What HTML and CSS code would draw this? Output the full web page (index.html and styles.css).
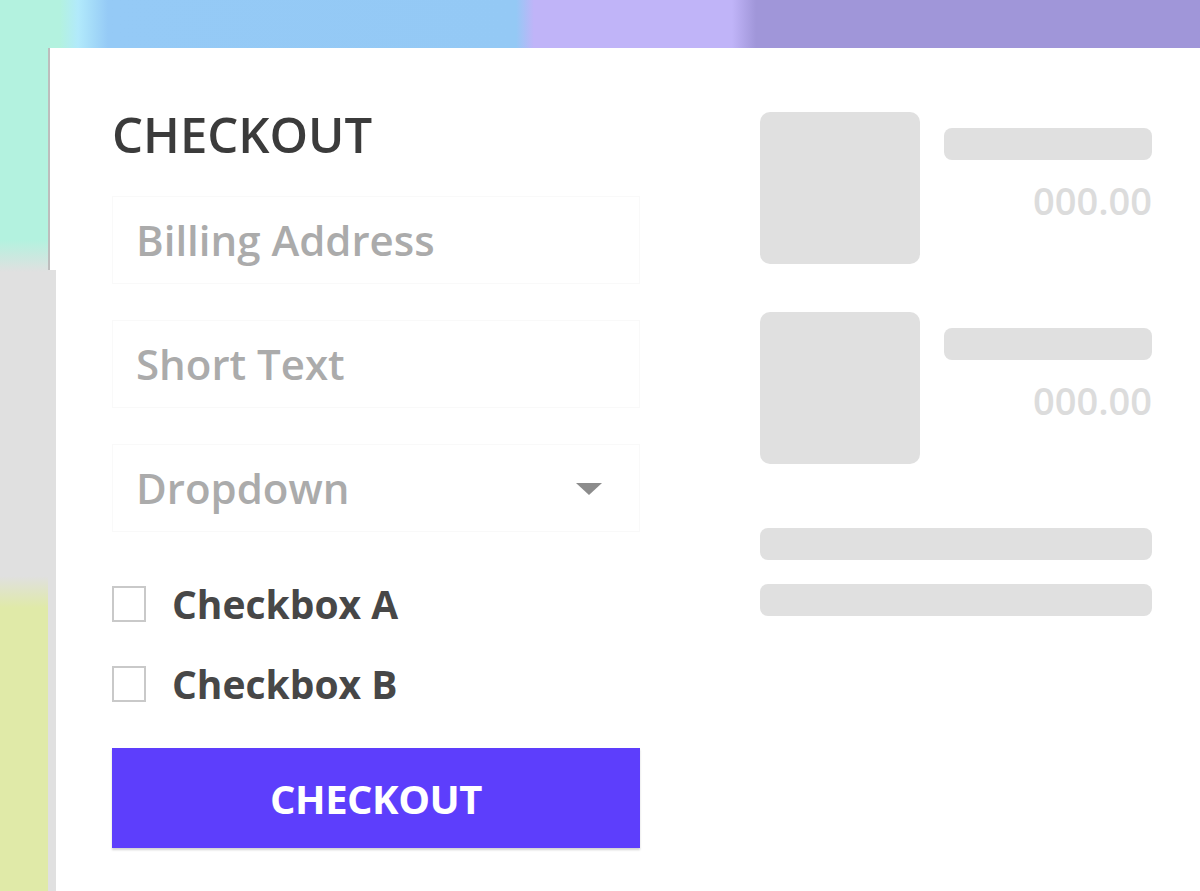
FILE: index.html
```html
<!DOCTYPE html>
<html lang="en">
<head>
    <meta charset="UTF-8">
    <meta name="viewport" content="width=device-width, initial-scale=1.0">
    <title>Checkout</title>
    <link rel="stylesheet" href="styles.css">
</head>
<body>

    <!-- COLOURED FRAME -->
    <div class="top-band"></div>

    <div class="stage">
        <div class="side-band"></div>

        <!-- CARD -->
        <main class="card">
            <form class="checkout-form">
                <h1 class="title">CHECKOUT</h1>
                <div class="field">Billing Address</div>
                <div class="field">Short Text</div>
                <div class="field field-select">
                    <span>Dropdown</span>
                    <svg class="caret" width="28" height="14" viewBox="0 0 28 14"><path d="M1 1h26L14 13z" fill="#8c8c8c"/></svg>
                </div>
                <label class="check"><span class="box"></span>Checkbox A</label>
                <label class="check"><span class="box"></span>Checkbox B</label>
                <button type="button" class="checkout-btn">CHECKOUT</button>
            </form>

            <!-- ORDER SUMMARY (placeholders) -->
            <aside class="summary">
                <div class="item">
                    <div class="thumb"></div>
                    <div class="item-info">
                        <div class="bar"></div>
                        <div class="price">000.00</div>
                    </div>
                </div>
                <div class="item">
                    <div class="thumb"></div>
                    <div class="item-info">
                        <div class="bar"></div>
                        <div class="price">000.00</div>
                    </div>
                </div>
                <div class="totals">
                    <div class="bar"></div>
                    <div class="bar"></div>
                </div>
            </aside>
        </main>
    </div>

</body>
</html>
```

FILE: styles.css
```css
* { margin: 0; padding: 0; box-sizing: border-box; }
body {
    width: 1200px;
    height: 891px;
    overflow: hidden;
    background: #fff;
    font-family: "Open Sans", Arial, sans-serif;
    display: flex;
    flex-direction: column;
}
.top-band {
    height: 48px;
    flex: none;
    background: linear-gradient(90deg,
        #b3f2df 0, #b3f2df 5%,
        #b2eafb 6.5%, #95caf6 9%,
        #94c9f5 43%, #c0b4f8 44.5%,
        #c0b4f8 61%, #a096d9 63%, #a096d9 100%);
}
.stage {
    flex: 1;
    display: flex;
    min-height: 0;
}
.side-band {
    width: 56px;
    flex: none;
    background:
        linear-gradient(#fff, #fff) right top / 6px 222px no-repeat,
        linear-gradient(#bdbdbd, #bdbdbd) 48px top / 2px 222px no-repeat,
        linear-gradient(#e0e0e0, #e0e0e0) right top / 8px 100% no-repeat,
        linear-gradient(180deg, #b3f2df 0, #b3f2df 192px, #e0e0e0 224px, #e0e0e0 528px, #e0eaa8 560px, #e0eaa8 100%);
}
.card {
    flex: 1;
    background: #fff;
    display: flex;
    gap: 120px;
    padding: 56px 0 0 56px;
}

/* left column */
.checkout-form {
    width: 528px;
    flex: none;
    display: flex;
    flex-direction: column;
}
.title {
    font-size: 49px;
    font-weight: 600;
    line-height: 60px;
    color: #3b3b3b;
    margin-bottom: 32px;
}
.field {
    height: 88px;
    border: 1px solid #f9f9f9;
    padding: 0 36px 0 23px;
    display: flex;
    align-items: center;
    justify-content: space-between;
    font-size: 42px;
    font-weight: 600;
    line-height: 56px;
    color: #ababab;
    margin-bottom: 36px;
}
.field-select { margin-bottom: 52px; }
.caret { margin-top: 2px; }
.check {
    display: flex;
    align-items: center;
    gap: 26px;
    height: 40px;
    font-size: 39px;
    font-weight: 700;
    line-height: 40px;
    color: #474747;
    margin-bottom: 40px;
}
.box {
    width: 34px;
    height: 36px;
    border: 2px solid #c9c9c9;
}
.checkout-btn {
    height: 100px;
    width: 100%;
    margin-top: 4px;
    border: none;
    background: #5d3efc;
    color: white;
    font-family: inherit;
    font-size: 40px;
    font-weight: 700;
    letter-spacing: -0.5px;
    box-shadow: 0 2px 2px rgba(0, 0, 0, 0.18);
}

/* right column */
.summary {
    width: 392px;
    flex: none;
    padding-top: 8px;
    display: flex;
    flex-direction: column;
}
.item {
    display: flex;
    gap: 24px;
    margin-bottom: 48px;
}
.thumb {
    width: 160px;
    height: 152px;
    border-radius: 10px;
    background: #e0e0e0;
}
.item-info {
    flex: 1;
    padding-top: 16px;
    display: flex;
    flex-direction: column;
    align-items: flex-end;
}
.bar {
    height: 32px;
    width: 100%;
    border-radius: 8px;
    background: #e0e0e0;
}
.price {
    margin-top: 24px;
    font-size: 38px;
    font-weight: 600;
    line-height: 32px;
    color: #dcdcdc;
}
.totals {
    margin-top: 16px;
    display: flex;
    flex-direction: column;
    gap: 24px;
}
```
